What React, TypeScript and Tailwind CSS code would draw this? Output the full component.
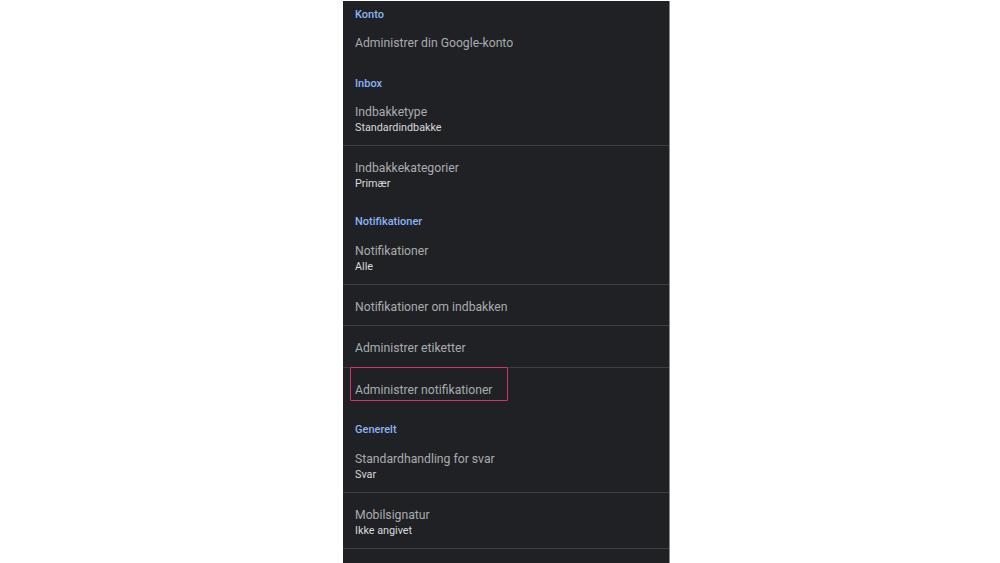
import React from "react";

const font = { fontFamily: "Roboto, 'Noto Sans', sans-serif" };

function Header({ text, h, pt }: { text: string; h: string; pt: string }) {
  return (
    <div className={`${h} ${pt} pl-[12px]`}>
      <div className="text-[11px] leading-[14px] font-medium text-[#8ab4f8]">{text}</div>
    </div>
  );
}

function Item({
  title,
  sub,
  h,
  pt,
  divider,
  highlight,
}: {
  title: string;
  sub?: string;
  h: string;
  pt: string;
  divider?: boolean;
  highlight?: boolean;
}) {
  return (
    <div className={`relative ${h} ${pt} pl-[12px] ${divider ? "border-b border-[#3c4043]" : ""}`}>
      <div className="text-[12.2px] leading-[17px] text-[#a9acb0]">{title}</div>
      {sub && <div className="text-[10.8px] leading-[14px] text-[#d8dadd]">{sub}</div>}
      {highlight && (
        <div className="absolute left-[7px] top-[-1px] w-[158px] h-[34px] border border-[#d6336c] rounded-[1px]" />
      )}
    </div>
  );
}

export default function App() {
  return (
    <div className="w-[1000px] h-[563px] bg-white flex overflow-hidden" style={font}>
      <div className="ml-[343px] mt-[1px] w-[327px] h-[562px] bg-[#202124] border-r border-[#8a8a8a] flex flex-col">
        <Header text="Konto" h="h-[26px]" pt="pt-[7px]" />
        <Item title="Administrer din Google-konto" h="h-[35px]" pt="pt-[8px]" />
        <Header text="Inbox" h="h-[35px]" pt="pt-[15px]" />
        <Item title="Indbakketype" sub="Standardindbakke" h="h-[49px]" pt="pt-[7px]" divider />
        <Item title="Indbakkekategorier" sub="Primær" h="h-[56px]" pt="pt-[14px]" />
        <Header text="Notifikationer" h="h-[34px]" pt="pt-[13px]" />
        <Item title="Notifikationer" sub="Alle" h="h-[49px]" pt="pt-[7px]" divider />
        <Item title="Notifikationer om indbakken" h="h-[41px]" pt="pt-[14px]" divider />
        <Item title="Administrer etiketter" h="h-[42px]" pt="pt-[14px]" divider />
        <Item title="Administrer notifikationer" h="h-[42px]" pt="pt-[14px]" highlight />
        <Header text="Generelt" h="h-[34px]" pt="pt-[13px]" />
        <Item title="Standardhandling for svar" sub="Svar" h="h-[49px]" pt="pt-[7px]" divider />
        <Item title="Mobilsignatur" sub="Ikke angivet" h="h-[56px]" pt="pt-[14px]" divider />
        <div className="flex-1" />
      </div>
    </div>
  );
}
